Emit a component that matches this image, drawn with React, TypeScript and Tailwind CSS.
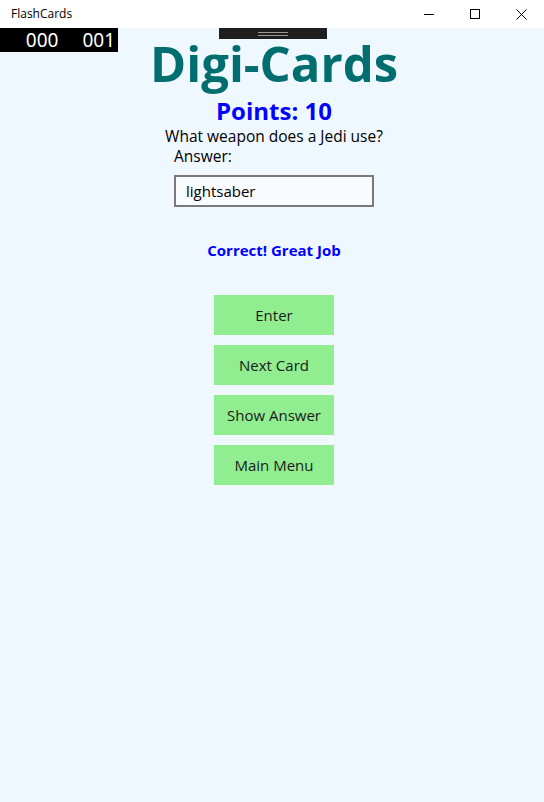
export default function App() {
  const buttons = ["Enter", "Next Card", "Show Answer", "Main Menu"];
  return (
    <div className="w-[544px] h-[802px] flex flex-col bg-white overflow-hidden" style={{ fontFamily: '"Open Sans", "Noto Sans", sans-serif' }}>
      <div className="h-[28px] flex items-center justify-between shrink-0">
        <span className="pl-[11px] text-[12px] text-black">FlashCards</span>
        <div className="flex h-full">
          <div className="w-[46px] h-full flex items-center justify-center">
            <svg width="10" height="10" viewBox="0 0 10 10"><path d="M0 5.5h10" stroke="#000" strokeWidth="1" /></svg>
          </div>
          <div className="w-[46px] h-full flex items-center justify-center">
            <svg width="10" height="10" viewBox="0 0 10 10"><rect x="0.5" y="0.5" width="9" height="9" fill="none" stroke="#000" strokeWidth="1" /></svg>
          </div>
          <div className="w-[46px] h-full flex items-center justify-center">
            <svg width="11" height="11" viewBox="0 0 11 11"><path d="M0.5 0.5l10 10M10.5 0.5l-10 10" stroke="#000" strokeWidth="1" /></svg>
          </div>
        </div>
      </div>
      <div className="relative flex-1 bg-[#f0f8ff] flex flex-col items-center">
        <div className="absolute left-0 top-0 w-[118px] h-[24px] bg-black flex items-center justify-end gap-[24px] pr-[3px] text-white text-[19px] leading-none" style={{ fontFamily: '"Noto Sans", sans-serif' }}>
          <span>000</span>
          <span>001</span>
        </div>
        <div className="absolute left-[219px] top-0 w-[108px] h-[11px] bg-[#1f1f1f] flex flex-col items-center justify-center gap-[2px]">
          <div className="w-[30px] h-px bg-[#9a9a9a]" />
          <div className="w-[30px] h-px bg-[#9a9a9a]" />
        </div>
        <div className="w-[544px] pl-[4px] flex flex-col items-center">
          <h1 className="mt-[2px] text-[49px] leading-[66px] font-bold text-[#006d6f]">Digi-Cards</h1>
          <div className="text-[24px] leading-[30px] font-bold text-[#0000ff]">Points: 10</div>
          <div className="text-[15.5px] leading-[20px] text-black">What weapon does a Jedi use?</div>
          <div className="w-[200px] text-[15.5px] leading-[20px] text-black">Answer:</div>
          <div className="mt-[9px] w-[200px] h-[32px] border-2 border-[#7a7a7a] bg-[#f8fbff] flex items-center pl-[10px] text-[15px] text-black">lightsaber</div>
          <div className="mt-[33px] text-[15px] leading-[20px] font-bold text-[#0000ff]">Correct! Great Job</div>
          <div className="mt-[35px] flex flex-col gap-[10px]">
            {buttons.map((b) => (
              <div key={b} className="w-[120px] h-[40px] bg-[#90ee90] flex items-center justify-center text-[15px] text-[#1a1a1a]">{b}</div>
            ))}
          </div>
        </div>
      </div>
    </div>
  );
}
